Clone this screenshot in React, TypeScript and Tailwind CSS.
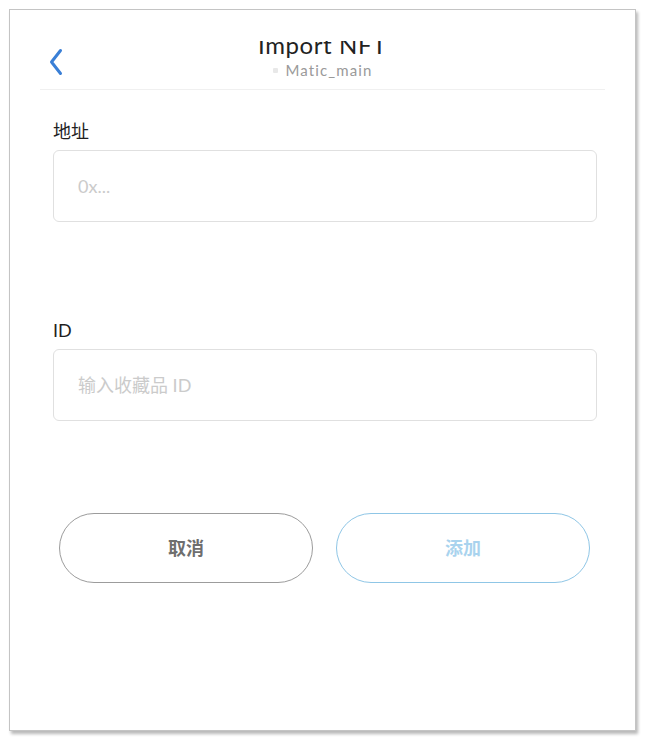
import React from 'react';

const font = "font-['Lato','Noto_Sans_CJK_SC',sans-serif]";

function BackIcon() {
  return (
    <svg width="14" height="28" viewBox="0 0 14 28" fill="none">
      <path d="M11.5 2.5 L2.5 14 L11.5 25.5" stroke="#3a7fd6" strokeWidth="3" strokeLinecap="round" strokeLinejoin="round" />
    </svg>
  );
}

type FieldProps = {
  label: string;
  placeholder: string;
};

function Field({ label, placeholder }: FieldProps) {
  return (
    <div className="flex flex-col gap-[7px]">
      <label className="text-[18px] leading-[24px] text-[#1f1f1f]">{label}</label>
      <input
        placeholder={placeholder}
        className={`${font} h-[72px] w-full rounded-[6px] border border-[#e0e0e0] bg-white px-[24px] text-[18px] text-[#333] outline-none placeholder:text-[#cbcbcb]`}
      />
    </div>
  );
}

export default function App() {
  return (
    <div className={`${font} h-[737px] w-[645px] bg-white pl-[9px] pt-[9px]`}>
      <div className="flex h-[722px] w-[627px] flex-col border border-[#c4c4c4] bg-white shadow-[2px_3px_3px_rgba(0,0,0,0.28)]">
        <div className="mx-[30px] grid h-[80px] grid-cols-[1fr_auto_1fr] border-b border-[#f0f0f0]">
          <div className="pl-[9px] pt-[38px]">
            <button className="block">
              <BackIcon />
            </button>
          </div>
          <div className="flex flex-col items-center pt-[31px]">
            <div className="h-[20px] overflow-hidden">
              <h1 className="-mt-[8px] text-[24px] leading-[24px] tracking-[0.6px] text-[#222]">Import NFT</h1>
            </div>
            <div className="mt-[1px] flex items-center gap-[8px]">
              <span className="h-[5px] w-[5px] rounded-[1px] bg-[#e8e8e8]" />
              <span className="text-[15px] leading-[16px] tracking-[1.1px] text-[#9a9a9a]">Matic_main</span>
            </div>
          </div>
          <div />
        </div>

        <div className="flex flex-col pl-[43px] pr-[38px] pt-[29px]">
          <Field label="地址" placeholder="0x..." />
          <div className="mt-[96px]">
            <Field label="ID" placeholder="输入收藏品 ID" />
          </div>

          <div className="mt-[92px] flex gap-[23px] pl-[6px] pr-[7px]">
            <button className="h-[70px] flex-1 rounded-full border-[1.5px] border-[#9c9c9c] text-[18px] font-semibold text-[#6e6e6e]">
              取消
            </button>
            <button className="h-[70px] flex-1 rounded-full border-[1.5px] border-[#8fc6e6] text-[18px] font-semibold text-[#a9d3ee]">
              添加
            </button>
          </div>
        </div>
      </div>
    </div>
  );
}
